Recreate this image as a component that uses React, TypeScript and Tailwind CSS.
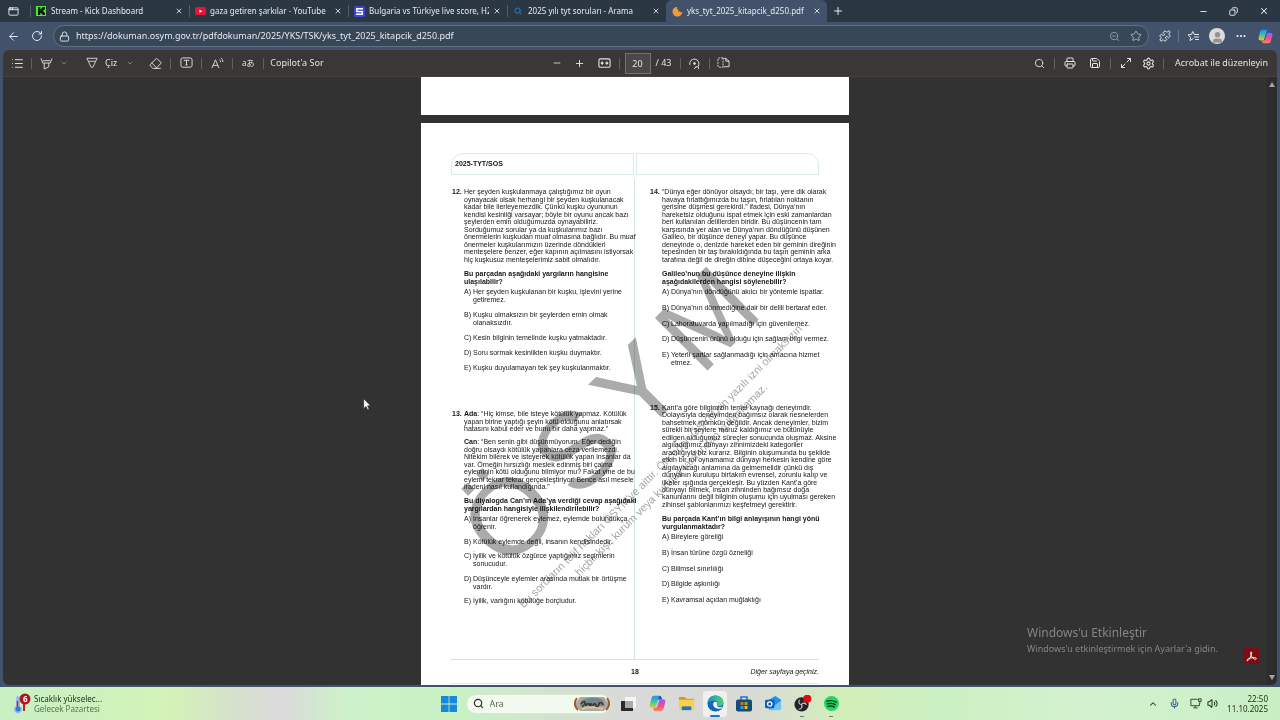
import React from "react";
import {
  AppWindow, ArrowLeft, RotateCw, Lock, ZoomOut, Star, Puzzle, MoreHorizontal, X, Plus, Minus, Copy,
  List, ChevronDown, ChevronUp, Eraser, Search, Printer, Save, Settings, Mic, Volume2, Maximize2, User,
} from "lucide-react";

const tabs = [
  { title: "Stream - Kick Dashboard", icon: "kick" },
  { title: "gaza getiren şarkılar - YouTube", icon: "youtube" },
  { title: "Bulgaria vs Türkiye live score, H2H", icon: "score" },
  { title: "2025 yılı tyt soruları - Arama", icon: "search" },
  { title: "yks_tyt_2025_kitapcik_d250.pdf", icon: "pdf" },
];

function Favicon({ kind }: { kind: string }) {
  if (kind === "kick")
    return (
      <svg viewBox="0 0 10 10" className="size-[10px] shrink-0">
        <path fill="#3df51b" d="M0 0h10v10H0z" />
        <path fill="#0b1a08" d="M2 1h2.3v2h1V2h1V1H9v2.6H8v1H7v1h1v1h1V9H6.300V8h-1V7h-1v2H2z" />
      </svg>
    );
  if (kind === "youtube")
    return (
      <svg viewBox="0 0 12 9" className="w-[11px] shrink-0">
        <rect width="12" height="9" rx="2.500" fill="#e8133a" />
        <path fill="#fff" d="M4.800 2.600v3.800L8 4.500z" />
      </svg>
    );
  if (kind === "score")
    return (
      <svg viewBox="0 0 11 11" className="size-[11px] shrink-0">
        <rect width="11" height="11" rx="1.500" fill="#3d43d6" />
        <path fill="none" stroke="#fff" strokeWidth="1.500" d="M9 2.800H2.800v2.700h5.400v2.700H2" />
      </svg>
    );
  if (kind === "search") return <Search className="size-[8px] shrink-0 text-[#1b82d8]" strokeWidth={3} />;
  return (
    <svg viewBox="0 0 12 12" className="size-[11px] shrink-0">
      <path fill="#f59a3a" d="M5.600 .8A5.400 5.400 0 1 0 11.300 6.500L9.500 7.200 8.800 5.800 6.800 6.200 7 4.200 5.400 3.400z" />
    </svg>
  );
}

function TabBar() {
  return (
    <header className="flex h-[22px] shrink-0 items-stretch bg-[#2b3743] text-[#e6eaee]">
      <button aria-label="Sekme menüsü" className="flex w-[30px] items-center justify-center pr-1">
        <AppWindow className="size-[11px]" strokeWidth={2} />
      </button>
      <nav className="flex min-w-0">
        {tabs.map((t, i) => {
          const active = i === tabs.length - 1;
          return (
            <div
              key={t.title}
              className={
                active
                  ? "flex w-[161px] items-center rounded-t-md bg-[#42526a] pl-[5px] pr-[6px]"
                  : "flex w-[159px] items-center pr-[6px]"
              }
            >
              {!active && <span className="mr-[4px] h-[12px] w-px shrink-0 bg-[#53606c]" />}
              <span className="flex w-[12px] shrink-0 justify-center">
                <Favicon kind={t.icon} />
              </span>
              <a href="#tab" className="ml-[4px] min-w-0 flex-1 overflow-hidden whitespace-nowrap text-[8px] leading-[12px]">
                {t.title}
              </a>
              <button aria-label="Sekmeyi kapat" className="ml-1 shrink-0">
                <X className="size-[8px]" strokeWidth={2.5} />
              </button>
            </div>
          );
        })}
      </nav>
      <button aria-label="Yeni sekme" className="ml-[5px]">
        <Plus className="size-[12px]" strokeWidth={2} />
      </button>
      <div className="ml-auto flex items-center gap-[21px] pr-[11px]">
        <button aria-label="Küçült"><Minus className="size-[9px]" strokeWidth={2.500} /></button>
        <button aria-label="Geri yükle"><Copy className="size-[9px] -scale-x-100" strokeWidth={2.500} /></button>
        <button aria-label="Kapat"><X className="size-[10px]" strokeWidth={2.500} /></button>
      </div>
    </header>
  );
}

function CopilotMark({ className }: { className: string }) {
  return (
    <svg viewBox="0 0 20 20" className={className}>
      <defs>
        <linearGradient id="cpA" x1="0" y1="0" x2="0" y2="1">
          <stop offset="0" stopColor="#2c8df0" /><stop offset=".5" stopColor="#3cc7a0" /><stop offset="1" stopColor="#f5c52c" />
        </linearGradient>
        <linearGradient id="cpB" x1="0" y1="0" x2="0" y2="1">
          <stop offset="0" stopColor="#9a5cf0" /><stop offset=".55" stopColor="#e84f9b" /><stop offset="1" stopColor="#fb8a4a" />
        </linearGradient>
      </defs>
      <path fill="url(#cpA)" d="M6 1h6c1.600 0 2.300 1 2.600 2l.6 2h-2.400c-1.500 0-2.300.9-2.700 2.300L8.500 13c-.5 1.700-1.300 2.300-2.700 2.300H3.500C1 15.300.3 13.300 1 10.800L2.800 4C3.300 2.200 4.200 1 6 1z" />
      <path fill="url(#cpB)" d="M14 19H8c-1.600 0-2.300-1-2.600-2l-.5-1.700h2.300c1.500 0 2.300-.9 2.700-2.300L11.500 7.300c.5-1.700 1.300-2.300 2.700-2.300h2.300c2.500 0 3.200 2 2.500 4.500L17.200 16c-.5 1.800-1.400 3-3.200 3z" />
      <path fill="#1d4fd0" d="M12 1c1.600 0 2.300 1 2.600 2l.6 2h-2.400c-1 0-1.700.4-2.100 1z" />
    </svg>
  );
}

function AddressBar() {
  return (
    <div className="flex h-[28px] shrink-0 items-center bg-[#42526a] pl-[6px] pr-[7px] text-[#e3e8ee]">
      <button aria-label="Geri" className="flex w-[15px] justify-center"><ArrowLeft className="size-[13px]" strokeWidth={1.800} /></button>
      <button aria-label="Yenile" className="ml-[9px] flex w-[14px] justify-center"><RotateCw className="size-[12px]" strokeWidth={2} /></button>
      <div className="ml-[9px] flex h-[22px] min-w-0 flex-1 items-center rounded-full border border-[#5f7081] bg-[#384757] pl-[5px] pr-[6px]">
        <Lock className="size-[11px] shrink-0" strokeWidth={2} />
        <input
          aria-label="Adres çubuğu"
          defaultValue="https://dokuman.osym.gov.tr/pdfdokuman/2025/YKS/TSK/yks_tyt_2025_kitapcik_d250.pdf"
          className="ml-[6px] min-w-0 flex-1 bg-transparent text-[9px] outline-none"
        />
        <button aria-label="Yakınlaştırma" className="text-[#93a0ad]"><ZoomOut className="size-[11px]" strokeWidth={2} /></button>
        <button aria-label="Sık kullanılanlara ekle" className="ml-[10px] text-[#a4b0bc]"><Star className="size-[12px]" strokeWidth={2} /></button>
      </div>
      <button aria-label="Uzantılar" className="ml-[10px]"><Puzzle className="size-[12px]" strokeWidth={2} /></button>
      <span className="ml-[7px] h-[12px] w-px bg-[#66778a]" />
      <button aria-label="Sık kullanılanlar" className="ml-[8px]">
        <svg viewBox="0 0 24 24" className="size-[12px]" fill="none" stroke="currentColor" strokeWidth="2" strokeLinejoin="round" strokeLinecap="round">
          <path d="M12 17.500 6 21l1.200-6.500L2 9.800l6.800-.9L11.500 3l2.800 5.500M15 9h8M15 14h8M17 19h6" />
        </svg>
      </button>
      <button aria-label="Profil" className="ml-[10px] flex size-[16px] items-end justify-center overflow-hidden rounded-full bg-[#dcdcdc]">
        <User className="size-[13px] fill-[#96918d] text-[#96918d]" />
      </button>
      <button aria-label="Diğer" className="ml-[10px]"><MoreHorizontal className="size-[12px]" strokeWidth={2.500} /></button>
      <button aria-label="Copilot" className="ml-[11px]"><CopilotMark className="size-[15px]" /></button>
    </div>
  );
}

const Sep = () => <span className="h-[11px] w-px shrink-0 bg-[#63605d]" />;

function Tool({ label, children }: { label: string; children: React.ReactNode }) {
  return <button aria-label={label} className="flex w-[14px] shrink-0 items-center justify-center">{children}</button>;
}

function Toolbar() {
  return (
    <div className="grid h-[27px] shrink-0 grid-cols-[1fr_auto_1fr] items-center border-b border-[#444240] bg-[#3a3837] text-[9px] text-[#e2e2e2]">
      <div className="flex items-center pl-[7px]">
        <Tool label="İçindekiler"><List className="size-[13px]" strokeWidth={1.800} /></Tool>
        <div className="flex items-center gap-[7px] pl-[7px]">
          <Sep />
          <Tool label="Vurgula">
            <svg viewBox="0 0 14 14" className="size-[13px]" fill="none" stroke="currentColor">
              <path d="M1 1.500l2 5h8l2-5M3 4h8M4.500 6.500V13l5-2.500v-4" />
            </svg>
          </Tool>
          <button aria-label="Vurgu seçenekleri"><ChevronDown className="size-[8px] text-[#a9a7a5]" /></button>
        </div>
        <button className="ml-[18px] flex items-center gap-[7px]">
          <svg viewBox="0 0 14 14" className="size-[12px]" fill="none" stroke="currentColor">
            <path d="M1 1.500h12L8 12H6zM3 5h8" />
          </svg>
          Çiz
        </button>
        <button aria-label="Çizim seçenekleri" className="ml-[9px]"><ChevronDown className="size-[8px] text-[#a9a7a5]" /></button>
        <div className="ml-[14px] flex items-center gap-[8px]">
          <Tool label="Sil"><Eraser className="size-[13px]" strokeWidth={1.800} /></Tool>
          <Sep />
          <Tool label="Metin ekle">
            <svg viewBox="0 0 14 12" className="w-[13px]" fill="none" stroke="currentColor">
              <rect x="1" y="1" width="12" height="10" rx="2" /><path d="M4.500 4.500V3.500h5v1M7 3.500v5M5.800 8.500h2.400" />
            </svg>
          </Tool>
          <Sep />
          <Tool label="Sesli oku">
            <svg viewBox="0 0 14 14" className="size-[13px]" fill="none" stroke="currentColor">
              <path d="M1 12 4.800 3 8.600 12M2.200 9h5.200M9 3c1 .6 1.500 1.500 1.500 2.500M10.500 1c1.600 1 2.300 2.500 2.300 4.500" />
            </svg>
          </Tool>
          <Sep />
          <button aria-label="Çevir" className="flex w-[14px] justify-center text-[8px]">aあ</button>
          <Sep />
        </div>
        <button className="ml-[6px] whitespace-nowrap">Copilot'a Sor</button>
      </div>

      <div className="flex items-center">
        <Tool label="Uzaklaştır"><Minus className="size-[10px]" /></Tool>
        <span className="w-[9px]" />
        <Tool label="Yakınlaştır"><Plus className="size-[11px]" /></Tool>
        <span className="w-[11px]" />
        <Tool label="Sayfaya sığdır">
          <svg viewBox="0 0 14 11" className="w-[13px]" fill="none" stroke="currentColor" strokeWidth="1.200">
            <rect x="1" y="1" width="12" height="9" rx="1.500" /><path d="M6 5.500H3.500M5 4 3.500 5.500 5 7M8 5.500h2.500M9 4l1.500 1.500L9 7" />
          </svg>
        </Tool>
        <div className="flex items-center gap-[7px] pl-[7px]">
          <Sep />
          <input aria-label="Sayfa" defaultValue="20" className="-mx-[2px] h-[21px] w-[26px] border border-[#74716e] bg-[#4b4947] text-center outline-none" />
          <span className="w-[17px] whitespace-nowrap">/ 43</span>
          <Sep />
          <Tool label="Döndür">
            <svg viewBox="0 0 14 14" className="size-[13px]" fill="none" stroke="currentColor">
              <path d="M2 8.500A5 5 0 1 1 11 10M8 10.500h3.200V13M6.500 13 9 10.500" /><circle cx="7" cy="7" r="1" fill="currentColor" />
            </svg>
          </Tool>
          <Sep />
          <Tool label="Sayfa görünümü">
            <svg viewBox="0 0 14 12" className="w-[13px]" fill="none" stroke="currentColor">
              <path d="M6.500 1v10M6.500 1H2.500C1.500 1 1 1.500 1 2.500v7c0 1 .5 1.500 1.500 1.500h4" strokeDasharray="2 1" />
              <path d="M7 1.500h2.500l3.500 3V10.500H7M9.500 1.500v3H13" />
            </svg>
          </Tool>
        </div>
      </div>

      <div className="flex items-center justify-end gap-[8px] pr-[9px]">
        <Tool label="Bul"><Search className="size-[11px]" /></Tool>
        <Sep />
        <Tool label="Yazdır"><Printer className="size-[12px]" /></Tool>
        <span className="-ml-[5px]" />
        <Tool label="Kaydet"><Save className="size-[12px]" /></Tool>
        <Sep />
        <Tool label="Tam ekran"><Maximize2 className="size-[12px]" /></Tool>
        <Tool label="Ayarlar"><Settings className="size-[13px]" /></Tool>
        <Sep />
        <button className="ml-[3px] whitespace-nowrap">Acrobat ile düzenleyin</button>
      </div>
    </div>
  );
}

function Lines({ lines, className, lead }: { lines: string[]; className: string; lead?: string }) {
  return (
    <p className={`flex flex-col justify-between leading-[7px] ${className}`}>
      {lines.map((l, i) => (
        <span key={l} className="whitespace-nowrap">
          {i === 0 && lead ? <b>{lead}</b> : null}
          {l}
        </span>
      ))}
    </p>
  );
}

function Options({ items, className }: { items: string[][]; className: string }) {
  return (
    <ol className={`flex flex-col justify-between leading-[8px] ${className}`}>
      {items.map((item, i) => (
        <li key={item[0]} className="flex whitespace-nowrap">
          <span className="w-[9px] shrink-0">{"ABCDE"[i]})</span>
          <span className="flex flex-col">{item.map((l) => <span key={l}>{l}</span>)}</span>
        </li>
      ))}
    </ol>
  );
}

function Question({ no, children, className }: { no: string; children: React.ReactNode; className: string }) {
  return (
    <section className={`flex items-start ${className}`}>
      <b className="w-[12px] shrink-0 leading-[7px]">{no}</b>
      <div className="min-w-0">{children}</div>
    </section>
  );
}

function Page() {
  return (
    <article className="relative h-[562px] w-[428px] bg-white px-[30px] pt-[30px] font-['Liberation_Sans',sans-serif] text-[7px] text-[#161616]">
      <div className="flex h-full flex-col">
        <div className="flex h-[22px] shrink-0 gap-[2px]">
          <h1 className="flex w-[183px] items-center rounded-tl-xl border border-[#d5eaea] pl-[3px] font-bold">2025-TYT/SOS</h1>
          <div className="flex-1 rounded-tr-xl border border-[#d5eaea]" />
        </div>
        <div className="mt-[4px] grid h-[481px] shrink-0 grid-cols-[184px_1fr] border-b border-[#cfe3e6]">
          <div className="border-r border-[#cfe3e6] pl-[1px] pt-[9px]">
            <Question no="12." className="h-[222px]">
              <Lines
                className="h-[75px]"
                lines={[
                  "Her şeyden kuşkulanmaya çalıştığımız bir oyun",
                  "oynayacak olsak herhangi bir şeyden kuşkulanacak",
                  "kadar bile ilerleyemezdik. Çünkü kuşku oyununun",
                  "kendisi kesinliği varsayar; böyle bir oyunu ancak bazı",
                  "şeylerden emin olduğumuzda oynayabiliriz.",
                  "Sorduğumuz sorular ya da kuşkularımız bazı",
                  "önermelerin kuşkudan muaf olmasına bağlıdır. Bu muaf",
                  "önermeler kuşkularımızın üzerinde döndükleri",
                  "menteşelere benzer, eğer kapının açılmasını istiyorsak",
                  "hiç kuşkusuz menteşelerimiz sabit olmalıdır.",
                ]}
              />
              <Lines className="mt-[7px] h-[15px] font-bold" lines={["Bu parçadan aşağıdaki yargıların hangisine", "ulaşılabilir?"]} />
              <Options
                className="mt-[3px] h-[84px]"
                items={[
                  ["Her şeyden kuşkulanan bir kuşku, işlevini yerine", "getiremez."],
                  ["Kuşku olmaksızın bir şeylerden emin olmak", "olanaksızdır."],
                  ["Kesin bilginin temelinde kuşku yatmaktadır."],
                  ["Soru sormak kesinlikten kuşku duymaktır."],
                  ["Kuşku duyulamayan tek şey kuşkulanmaktır."],
                ]}
              />
            </Question>
            <Question no="13." className="">
              <Lines
                className="h-[22px]"
                lead="Ada"
                lines={[
                  ": “Hiç kimse, bile isteye kötülük yapmaz. Kötülük",
                  "yapan birine yaptığı şeyin kötü olduğunu anlatırsak",
                  "hatasını kabul eder ve bunu bir daha yapmaz.”",
                ]}
              />
              <Lines
                className="mt-[6px] h-[52px]"
                lead="Can"
                lines={[
                  ": “Ben senin gibi düşünmüyorum. Eğer dediğin",
                  "doğru olsaydı kötülük yapanlara ceza verilemezdi.",
                  "Nitekim bilerek ve isteyerek kötülük yapan insanlar da",
                  "var. Örneğin hırsızlığı meslek edinmiş biri çalma",
                  "eyleminin kötü olduğunu bilmiyor mu? Fakat yine de bu",
                  "eylemi tekrar tekrar gerçekleştiriyor. Bence asıl mesele",
                  "iradeni nasıl kullandığında.”",
                ]}
              />
              <Lines
                className="mt-[7px] h-[15px] font-bold"
                lines={["Bu diyalogda Can’ın Ada’ya verdiği cevap aşağıdaki", "yargılardan hangisiyle ilişkilendirilebilir?"]}
              />
              <Options
                className="mt-[3px] h-[90px]"
                items={[
                  ["İnsanlar öğrenerek eylemez, eylemde bulundukça", "öğrenir."],
                  ["Kötülük eylemde değil, insanın kendisindedir."],
                  ["İyilik ve kötülük özgürce yaptığımız seçimlerin", "sonucudur."],
                  ["Düşünceyle eylemler arasında mutlak bir örtüşme", "vardır."],
                  ["İyilik, varlığını kötülüğe borçludur."],
                ]}
              />
            </Question>
          </div>
          <div className="pl-[15px] pt-[9px]">
            <Question no="14." className="h-[216px]">
              <Lines
                className="h-[75px]"
                lines={[
                  "“Dünya eğer dönüyor olsaydı; bir taşı, yere dik olarak",
                  "havaya fırlattığımızda bu taşın, fırlatılan noktanın",
                  "gerisine düşmesi gerekirdi.” ifadesi, Dünya’nın",
                  "hareketsiz olduğunu ispat etmek için eski zamanlardan",
                  "beri kullanılan delillerden biridir. Bu düşüncenin tam",
                  "karşısında yer alan ve Dünya’nın döndüğünü düşünen",
                  "Galileo, bir düşünce deneyi yapar. Bu düşünce",
                  "deneyinde o, denizde hareket eden bir geminin direğinin",
                  "tepesinden bir taş bırakıldığında bu taşın geminin arka",
                  "tarafına değil de direğin dibine düşeceğini ortaya koyar.",
                ]}
              />
              <Lines className="mt-[7px] h-[15px] font-bold" lines={["Galileo’nun bu düşünce deneyine ilişkin", "aşağıdakilerden hangisi söylenebilir?"]} />
              <Options
                className="mt-[3px] h-[79px]"
                items={[
                  ["Dünya’nın döndüğünü akılcı bir yöntemle ispatlar."],
                  ["Dünya’nın dönmediğine dair bir delili bertaraf eder."],
                  ["Laboratuvarda yapılmadığı için güvenilemez."],
                  ["Düşüncenin ürünü olduğu için sağlam bilgi vermez."],
                  ["Yeterli şartlar sağlanmadığı için amacına hizmet", "etmez."],
                ]}
              />
            </Question>
            <Question no="15." className="">
              <Lines
                className="h-[104px]"
                lines={[
                  "Kant’a göre bilgimizin temel kaynağı deneyimdir.",
                  "Dolayısıyla deneyimden bağımsız olarak nesnelerden",
                  "bahsetmek mümkün değildir. Ancak deneyimler, bizim",
                  "sürekli bir şeylere maruz kaldığımız ve bütünüyle",
                  "edilgen olduğumuz süreçler sonucunda oluşmaz. Aksine",
                  "algıladığımız dünyayı zihnimizdeki kategoriler",
                  "aracılığıyla biz kurarız. Bilginin oluşumunda bu şekilde",
                  "etkin bir rol oynamamız dünyayı herkesin kendine göre",
                  "algılayacağı anlamına da gelmemelidir çünkü dış",
                  "dünyanın kuruluşu birtakım evrensel, zorunlu kalıp ve",
                  "ilkeler ışığında gerçekleşir. Bu yüzden Kant’a göre",
                  "dünyayı bilmek, insan zihninden bağımsız doğa",
                  "kanunlarını değil bilginin oluşumu için uyulması gereken",
                  "zihinsel şablonlarımızı keşfetmeyi gerektirir.",
                ]}
              />
              <Lines className="mt-[7px] h-[15px] font-bold" lines={["Bu parçada Kant’ın bilgi anlayışının hangi yönü", "vurgulanmaktadır?"]} />
              <Options
                className="mt-[3px] h-[71px]"
                items={[["Bireylere göreliği"], ["İnsan türüne özgü özneliği"], ["Bilimsel sınırlılığı"], ["Bilgide aşkınlığı"], ["Kavramsal açıdan muğlaklığı"]]}
              />
            </Question>
          </div>
        </div>
        <footer className="grid h-[24px] shrink-0 grid-cols-3 items-center border-b border-[#dcebed] pt-[2px]">
          <span />
          <b className="text-center">18</b>
          <i className="text-right">Diğer sayfaya geçiniz.</i>
        </footer>
      </div>

      <div className="pointer-events-none leading-none mix-blend-multiply">
        <div className="absolute left-[97px] top-[353px] flex origin-bottom-left -rotate-45 gap-4 text-[108px] leading-none text-[#ababab]">
          <span>Ö</span><span>S</span><span>Y</span><span>M</span>
        </div>
        <p className="absolute left-[104px] top-[476px] origin-bottom-left -rotate-45 whitespace-nowrap text-[11px] leading-none text-[#a6a6a6]">
          Bu soruların telif hakları ÖSYM'ye aittir. Önceden ÖSYM'nin yazılı izni olmaksızın
        </p>
        <p className="absolute left-[160px] top-[444px] origin-bottom-left -rotate-45 whitespace-nowrap text-[11px] leading-none text-[#a6a6a6]">
          hiçbir kişi, kurum veya kuruluş tarafından kullanılamaz.
        </p>
      </div>
    </article>
  );
}

function Viewer() {
  return (
    <main className="relative flex min-h-0 flex-1 overflow-hidden bg-[#323232]">
      <div className="flex min-w-0 flex-1 flex-col items-center gap-[8px] overflow-hidden">
        <div className="h-[38px] w-[428px] shrink-0 bg-white" />
        <Page />
      </div>
      <div className="flex w-[10px] shrink-0 flex-col items-center justify-between bg-[#2d2d2d] py-[5px]">
        <svg viewBox="0 0 6 5" className="w-[6px] fill-[#a5a5a5]"><path d="M3 0l3 5H0z" /></svg>
        <svg viewBox="0 0 6 5" className="w-[6px] fill-[#a5a5a5]"><path d="M3 5l3-5H0z" /></svg>
      </div>
      <div className="absolute bottom-[30px] right-[51px] w-[199px] whitespace-nowrap font-['Noto_Sans',sans-serif] text-[#858585]">
        <p className="text-[12px] leading-[18px]">Windows'u Etkinleştir</p>
        <p className="text-[9px] leading-[13px]">Windows'u etkinleştirmek için Ayarlar'a gidin.</p>
      </div>
      <button aria-label="Acrobat" className="absolute bottom-[21px] right-[18px] flex size-[16px] items-center justify-center bg-[#7d0d15]">
        <svg viewBox="0 0 14 14" className="size-[13px]" fill="none" stroke="#fff">
          <path d="M6.500 2c-.8 0-.6 2 .2 4 .8 2 2.800 4 4.500 4s1.500-1.700-.8-1.800C7.500 8 4.500 8.800 2.800 10c-1.300 1-.6 2 .4 1.300C5 10 6.500 6.500 7 4.500 7.300 3 7.200 2 6.500 2z" />
        </svg>
      </button>
      <svg viewBox="0 0 12 19" className="absolute left-[360px] top-[321px] w-[8px]">
        <path d="M1 1v15l3.500-3.300L7 18l2.300-1-2.400-5.200H11.500z" fill="#fff" stroke="#222" />
      </svg>
    </main>
  );
}

function TaskApp({ label, active, dot, children }: { label: string; active?: boolean; dot?: boolean; children: React.ReactNode }) {
  return (
    <button aria-label={label} className="flex w-[29px] justify-center">
      <span className={`relative flex h-[26px] w-[24px] items-center justify-center rounded-sm ${active ? "bg-white/60" : ""}`}>
        {children}
        {active && <span className="absolute bottom-0 h-[2px] w-[10px] rounded-full bg-[#1478c8]" />}
        {dot && <span className="absolute bottom-0 h-px w-[4px] bg-[#70806c]" />}
      </span>
    </button>
  );
}

function Taskbar() {
  return (
    <footer className="grid h-[33px] shrink-0 grid-cols-[1fr_auto_1fr] items-center bg-[linear-gradient(90deg,#c8f0c4_0%,#d3f3b8_13%,#d6dfce_19%,#dadadb_22%,#cdf1c9_27%,#c9f2c4_36%,#d3e2cf_43%,#d9d9d9_50%,#d9dbd6_59%,#d3efb8_66%,#cbf0c2_73%,#d4f2cf_85%,#c8efc4_100%)] font-['Noto_Sans',sans-serif] text-[#25301f]">
      <button className="flex items-center pl-[13px] text-left">
        <span className="relative mr-[3px] h-[22px] w-[18px]">
          <svg viewBox="0 0 18 22" className="h-[22px] w-[18px]">
            <path d="M3 5a2 2 0 0 1 4 0v8a4 4 0 1 1-4 0z" fill="#9ab9e8" />
            <path d="M4.500 8v7" stroke="#c02030" strokeWidth="1.500" />
            <circle cx="5" cy="16" r="2.500" fill="#2f7fd8" />
            <path d="M10 10h2v8h-2z" fill="#b8232f" />
            <circle cx="12" cy="6" r="5.500" fill="#b3131f" />
          </svg>
          <span className="absolute left-[10px] top-[1px] text-[8px] font-bold leading-[10px] text-white">6</span>
        </span>
        <span className="flex flex-col text-[8px] leading-[10px]">
          <span>Sıcaklık yükselec...</span>
          <span className="text-[#62705c]">Gelecek Pazartesi</span>
        </span>
      </button>

      <div className="flex items-center">
        <button aria-label="Başlat" className="flex w-[28px] justify-center">
          <svg viewBox="0 0 16 16" className="size-[16px]"><path fill="#1887dc" d="M0 0h7.600v7.600H0zM8.400 0H16v7.600H8.400zM0 8.400h7.600V16H0zM8.400 8.400H16V16H8.400z" /></svg>
        </button>
        <label className="mx-[3px] flex h-[20px] w-[145px] items-center rounded-full border border-[#d9e8d3] bg-[#f3faef] pl-[6px]">
          <Search className="size-[11px] shrink-0" strokeWidth={2.500} />
          <input aria-label="Ara" placeholder="Ara" className="ml-[6px] w-0 flex-1 bg-transparent text-[9px] outline-none placeholder:text-[#5c6658]" />
          <svg viewBox="0 0 36 18" className="h-[18px] w-[36px] shrink-0">
            <path d="M6 2h24l5 7-5 7H6L1 9z" fill="#a9aba0" />
            <path d="M7 6c5-4 15-5 22-1l2 6H6z" fill="#74858b" />
            <path d="M3 3c-3 4-3 8 1 12M33 3c3 4 3 8-1 12" fill="none" stroke="#a25a2d" strokeWidth="2" />
            <path d="M7 9c2-3 4-3 4-1s-3 4-3 4M12 11c0-3 4-3 4 0M17 8v3M19 11c0-3 3-3 3 0s3 0 3-2 3-2 4 1" fill="none" stroke="#3d2c24" strokeWidth="1.500" />
            <path d="M8 14c7-2 14-2 21 0" fill="none" stroke="#e3c9a4" strokeWidth="1.500" />
          </svg>
        </label>
        <TaskApp label="Görev görünümü">
          <svg viewBox="0 0 16 16" className="size-[16px]"><path fill="#f5f5f5" d="M5 1h11v11H5z" /><path fill="#2b2b2b" d="M1 5h4v7h8v3H1z" /><path fill="#a9a9a9" d="M5 5h8v7H5z" /></svg>
        </TaskApp>
        <TaskApp label="Copilot"><CopilotMark className="size-[17px]" /></TaskApp>
        <TaskApp label="Dosya Gezgini">
          <svg viewBox="0 0 18 16" className="w-[17px]"><path fill="#d99a1c" d="M1 1h6l2 2h8v4H1z" /><path fill="#fbcf4b" d="M1 4h16v11H1z" /><path fill="#1c77c4" d="M4 11h10v4H4z" /></svg>
        </TaskApp>
        <TaskApp label="Edge" active>
          <svg viewBox="0 0 18 18" className="size-[17px]">
            <defs><linearGradient id="edge" x1="0" y1="0" x2="1" y2="0"><stop offset="0" stopColor="#1c8fdb" /><stop offset="1" stopColor="#54d06d" /></linearGradient></defs>
            <circle cx="9" cy="9" r="8.500" fill="#1566b8" />
            <path fill="url(#edge)" d="M.6 8C1 3.500 4.500.5 9 .5c5 0 8.500 3.500 8.500 7 0 3-2 4.500-4.500 4.500-2 0-3-.7-2.300-1.800C12 8 10.500 6 7.500 6 4.500 6 1.500 7 .6 8z" />
            <path fill="#f2faf2" d="M10.600 10.200C11.400 8.500 10 7 8.500 7.200 6.500 7.600 6 9.800 7 11.700c1.500 2.800 5 3.500 8.300 2.300l1-1.500c-2 .8-6.300.4-5.700-2.300z" />
          </svg>
        </TaskApp>
        <TaskApp label="Microsoft Store">
          <svg viewBox="0 0 16 16" className="size-[16px]"><path fill="none" stroke="#1679bd" strokeWidth="1.500" d="M5 4V1h6v3" /><rect y="3.500" width="16" height="12" rx="2" fill="#174a78" /><path fill="#f25c33" d="M4.500 6h3v3h-3z" /><path fill="#7fba22" d="M8.500 6h3v3h-3z" /><path fill="#1fa4ef" d="M4.500 10h3v3h-3z" /><path fill="#fdb913" d="M8.500 10h3v3h-3z" /></svg>
        </TaskApp>
        <TaskApp label="Outlook">
          <svg viewBox="0 0 18 16" className="w-[17px]"><path fill="#2a8fe0" d="M4 4l7-4 6 4v10H4z" /><path fill="#6cc4f5" d="M4 14 17 5v8c0 1-1 2-2 2H5z" /><rect y="4" width="10" height="9" rx="1.500" fill="#0f5fb4" /><circle cx="5" cy="8.500" r="2.300" fill="none" stroke="#fff" strokeWidth="1.300" /></svg>
        </TaskApp>
        <TaskApp label="OBS Studio" dot>
          <svg viewBox="0 0 20 18" className="w-[19px]"><circle cx="9" cy="10" r="7.500" fill="#262326" /><path d="M9 10c-3 0-3.500-3-2-5M9 10c1.500-2.500 4.500-1.500 5 .5M9 10c1.500 2.500-.5 5-3 5" fill="none" stroke="#cfcbcf" strokeWidth="1.200" /><circle cx="15" cy="4" r="4.300" fill="#e00b12" /></svg>
        </TaskApp>
        <TaskApp label="Spotify" dot>
          <svg viewBox="0 0 16 16" className="size-[15px]"><circle cx="8" cy="8" r="8" fill="#1fd760" /><path d="M3 5.500c3.500-1 7-.7 10 1M3.700 8.300c3-.8 6-.5 8.300.8M4.200 11c2.500-.6 4.800-.4 6.800.7" fill="none" stroke="#10331c" strokeWidth="1.500" strokeLinecap="round" /></svg>
        </TaskApp>
      </div>

      <div className="flex items-center justify-end pr-[12px]">
        <button aria-label="Gizli simgeler"><ChevronUp className="size-[10px]" strokeWidth={2.500} /></button>
        <button aria-label="Mikrofon" className="ml-[11px]"><Mic className="size-[11px] text-[#3762a0]" strokeWidth={2.300} /></button>
        <button aria-label="Ağ" className="ml-[10px]">
          <svg viewBox="0 0 14 12" className="w-[12px]" fill="none" stroke="currentColor"><path d="M9 1.500H1v7.500h10V6M4 11.500h5M6 9v2M10 1h3v3h-3zM11.500 4v2.500" /></svg>
        </button>
        <button aria-label="Ses" className="ml-[5px]"><Volume2 className="size-[11px]" strokeWidth={2.200} /></button>
        <time className="ml-[11px] flex w-[39px] flex-col items-end text-[8px] leading-[10px]">
          <span>22:50</span>
          <span>11.10.2025</span>
        </time>
      </div>
    </footer>
  );
}

export default function App() {
  return (
    <div className="flex h-screen flex-col overflow-hidden bg-[#42526a] font-['Noto_Sans','Noto_Sans_CJK_JP',sans-serif]">
      <TabBar />
      <AddressBar />
      <div className="mx-[3px] mb-[2px] flex min-h-0 flex-1 flex-col overflow-hidden rounded-md">
        <Toolbar />
        <Viewer />
      </div>
      <Taskbar />
    </div>
  );
}
